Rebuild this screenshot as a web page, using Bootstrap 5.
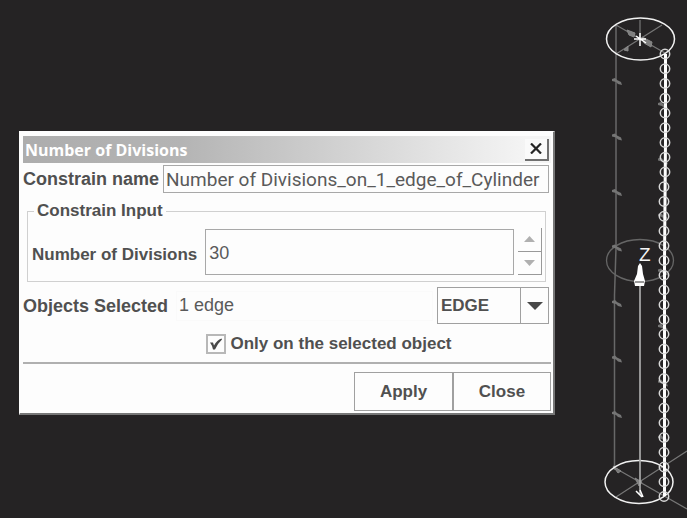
<!DOCTYPE html>
<html lang="en">
<head>
<meta charset="utf-8">
<meta name="viewport" content="width=device-width, initial-scale=1">
<title>Number of Divisions</title>
<link href="https://cdn.jsdelivr.net/npm/bootstrap@5.3.0/dist/css/bootstrap.min.css" rel="stylesheet">
<style>
  body { background: #252324; color: #505050; font-family: "Liberation Sans", Arial, sans-serif; font-size: 17px; line-height: 24px; }
  .dlg { flex: 0 1 536px; margin: 131px 0 24px 19px; padding: 4px 2px 2px 3px; background: #fdfdfd; border: 1px solid #fdfdfd; border-right: 2px solid #777; border-bottom: 2px solid #777; }
  .dlg-title { height: 27px; padding: 0 2px; background: linear-gradient(90deg, #adadad, #b4b4b4 30%, #f4f4f4 95%); }
  .dlg-title h1 { font: bold 16px/26px "Open Sans", "Noto Sans", sans-serif; color: #fff; }
  .x-btn { width: 24px; height: 22px; background: #fafafa; border: 0; border-right: 2px solid #707070; border-bottom: 2px solid #707070; }
  .lead-label { font-size: 18px; font-weight: bold; }
  .field { min-width: 0; color: #5a5a5a; background: #fdfdfd; border: 1px solid #a8a8a8; border-radius: 0; font-size: 18px; padding: 0 2px; }
  .name-field { height: 28px; font-family: Roboto, "Liberation Sans", sans-serif; font-size: 19px; }
  .row-top { padding: 2px 2px 0 0; }
  .group { border: 1px solid #d0d0d0; padding: 0 3px 6px 4px; margin: 6px 5px 0 4px; }
  .group legend { float: none; width: auto; font-size: 17px; line-height: 24px; margin: 0 0 0 2px; padding: 0 3px; }
  .row-num { padding-top: 5px; }
  .num-label { padding-top: 6px; }
  .num-field { height: 46px; padding: 4px 3px 0; }
  .spin { width: 24px; height: 47px; }
  .spin button { background: #fdfdfd; border: 0; border-right: 1px solid #999; border-bottom: 1px solid #999; }
  .plain-field { border-color: #fafafa; height: 30px; }
  .row-pick { padding: 5px 2px 0 0; }
  .pick { width: 112px; height: 37px; }
  .pick select { appearance: none; color: inherit; background: #fdfdfd; border: 1px solid #a0a0a0; border-radius: 0; padding: 0 30px 0 3px; font-size: 17px; }
  .pick-arrow { top: 1px; right: 1px; bottom: 1px; width: 28px; border-left: 1px solid #a0a0a0; pointer-events: none; }
  .row-tick { padding: 8px 0 6px 84px; }
  .tick { width: 20px; height: 20px; }
  .tick input { appearance: none; width: 20px; height: 20px; margin: 0; border: 2px solid #b8b8b8; background: #fdfdfd; }
  .tick svg { top: 4px; left: 3px; visibility: hidden; pointer-events: none; }
  .tick input:checked + svg { visibility: visible; }
  .actions { border-top: 2px solid #b0b0b0; padding-top: 8px; }
  .act { width: 99px; height: 39px; color: inherit; background: #fdfdfd; border: 1px solid #a0a0a0; font-weight: bold; font-size: 17px; }
  .act + .act { margin-left: -1px; border-left-width: 2px; }
</style>
</head>
<body>
<main class="d-flex justify-content-between align-items-start overflow-hidden">
  <form class="dlg" aria-labelledby="dlgTitle">
    <div class="dlg-title d-flex align-items-center justify-content-between">
      <h1 id="dlgTitle" class="m-0 text-nowrap">Number of Divisions</h1>
      <button type="button" class="x-btn p-0 d-flex align-items-center justify-content-center" aria-label="Close dialog">
        <svg width="12" height="11" viewBox="0 0 12 11"><path d="M1 0.5 11 10.5M11 0.5 1 10.5" stroke="#252525" stroke-width="2.2"/></svg>
      </button>
    </div>
    <div class="row-top d-flex align-items-center">
      <label for="cname" class="lead-label text-nowrap me-1">Constrain name</label>
      <input id="cname" class="field name-field flex-grow-1" type="text" value="Number of Divisions_on_1_edge_of_Cylinder">
    </div>
    <fieldset class="group">
      <legend class="fw-bold">Constrain Input</legend>
      <div class="row-num d-flex align-items-center">
        <label for="ndiv" class="num-label fw-bold text-nowrap me-2">Number of Divisions</label>
        <input id="ndiv" class="field num-field flex-grow-1" type="text" inputmode="numeric" value="30">
        <div class="spin d-flex flex-column ms-1">
          <button type="button" class="flex-fill p-0 d-flex align-items-center justify-content-center" aria-label="Increase"><svg width="11" height="6"><path d="M0 6 5.5 0 11 6z" fill="#b0b0b0"/></svg></button>
          <button type="button" class="flex-fill p-0 d-flex align-items-center justify-content-center" aria-label="Decrease"><svg width="11" height="6"><path d="M0 0 5.5 6 11 0z" fill="#b0b0b0"/></svg></button>
        </div>
      </div>
    </fieldset>
    <div class="row-pick d-flex align-items-center">
      <label for="osel" class="lead-label text-nowrap me-2">Objects Selected</label>
      <input id="osel" class="field plain-field flex-grow-1 me-1" type="text" value="1 edge" readonly>
      <div class="pick position-relative">
        <select class="w-100 h-100 fw-bold" aria-label="Object type"><option>EDGE</option></select>
        <span class="pick-arrow position-absolute d-flex align-items-center justify-content-center"><svg width="16" height="8"><path d="M0 0H16L8 8z" fill="#484848"/></svg></span>
      </div>
    </div>
    <div class="row-tick d-flex justify-content-center align-items-center gap-1">
      <span class="tick position-relative">
        <input id="only" class="d-block" type="checkbox" checked>
        <svg class="position-absolute" width="14" height="12" viewBox="0 0 14 12"><path d="M1 4.5 4 4.5 5 7.5Q8 2 12.5 0.5L13 1.5Q9 5 6 11.5H4Q3 7 1 4.500z" fill="#484848"/></svg>
      </span>
      <label for="only" class="fw-bold text-nowrap">Only on the selected object</label>
    </div>
    <div class="actions d-flex justify-content-end">
      <button type="submit" class="act">Apply</button>
      <button type="button" class="act">Close</button>
    </div>
  </form>
  <svg class="flex-shrink-0" width="87" height="518" viewBox="600 0 87 518" fill="none" role="img" aria-label="Meshed cylinder with Z axis">
    <defs>
      <g id="mk"><path d="M-4-2-1-3 1-1 5 1 6 4 2 3 0 1-4 0z" fill="#757575"/></g>
    </defs>
    <path d="M616 25V248L614.500 295V470" stroke="#686868" stroke-width="1.500"/>
    <ellipse cx="640" cy="260.500" rx="33.500" ry="21" stroke="#666" stroke-width="1.300"/>
    <path d="M616 54 662 25M616 25 665 53M640 20V38" stroke="#777" stroke-width="1.200"/>
    <path d="M627 30 635 33 634 37 629 35zM642 37 652 42 651 47 644 43zM624 50 628 46 628 51z" fill="#808080" stroke="#888"/>
    <path d="M616 497 687 451M615 468 687 509" stroke="#777" stroke-width="1.200"/>
    <path d="M613 466 621 471 618 473zM635 478 642 482 639 486zM638 480V484" stroke="#888" fill="#777"/>
    <g stroke="#f2f2f2" stroke-width="1.500">
      <ellipse cx="640.500" cy="39" rx="34" ry="21"/>
      <ellipse cx="639" cy="482" rx="34" ry="21.500"/>
    </g>
    <path d="M640 285V495" stroke="#aaa" stroke-width="1.700"/>
    <path d="M636 491 642 497M640 490 643 497" stroke="#fff" stroke-width="1.500"/>
    <path d="M640 33V46M634 39H646M636 36 646 43" stroke="#fff" stroke-width="1.500"/>
    <path d="M640 263 642 266 643 274 645 281 644 286H635L634 281 637 274 638 266z" fill="#fff"/>
    <path d="M635 282H644" stroke="#333"/>
    <text x="639" y="261" font-family="Liberation Sans, Arial, sans-serif" font-size="19" fill="#f5f5f5">Z</text>
    <g id="ticks"></g>
    <path d="M665.500 54V140L664.500 260V496" stroke="#fff" stroke-width="3"/>
    <g id="nodes" stroke="#d8d8d8" stroke-width="1.500"></g>
  </svg>
</main>
<script src="https://cdn.jsdelivr.net/npm/bootstrap@5.3.0/dist/js/bootstrap.bundle.min.js"></script>
<script>
  // Mesh nodes along the selected edge, one per division, plus element marks on both sides
  const ns = 'http://www.w3.org/2000/svg';
  const add = (parent, tag, attrs) => {
    const el = document.createElementNS(ns, tag);
    for (const k in attrs) el.setAttribute(k, attrs[k]);
    document.getElementById(parent).appendChild(el);
  };
  const divisions = 30;
  for (let i = 0; i <= divisions; i++)
    add('nodes', 'circle', { cx: i < 9 ? 665 : 664, cy: 54 + i * 442.5 / divisions, r: 4.7 });
  for (let i = 0; i < 7; i++) {
    add('ticks', 'use', { href: '#mk', transform: `translate(616 ${81 + i * 55.5})` });
    add('ticks', 'use', { href: '#mk', transform: `translate(662 ${105 + i * 55.5})` });
  }
</script>
</body>
</html>
